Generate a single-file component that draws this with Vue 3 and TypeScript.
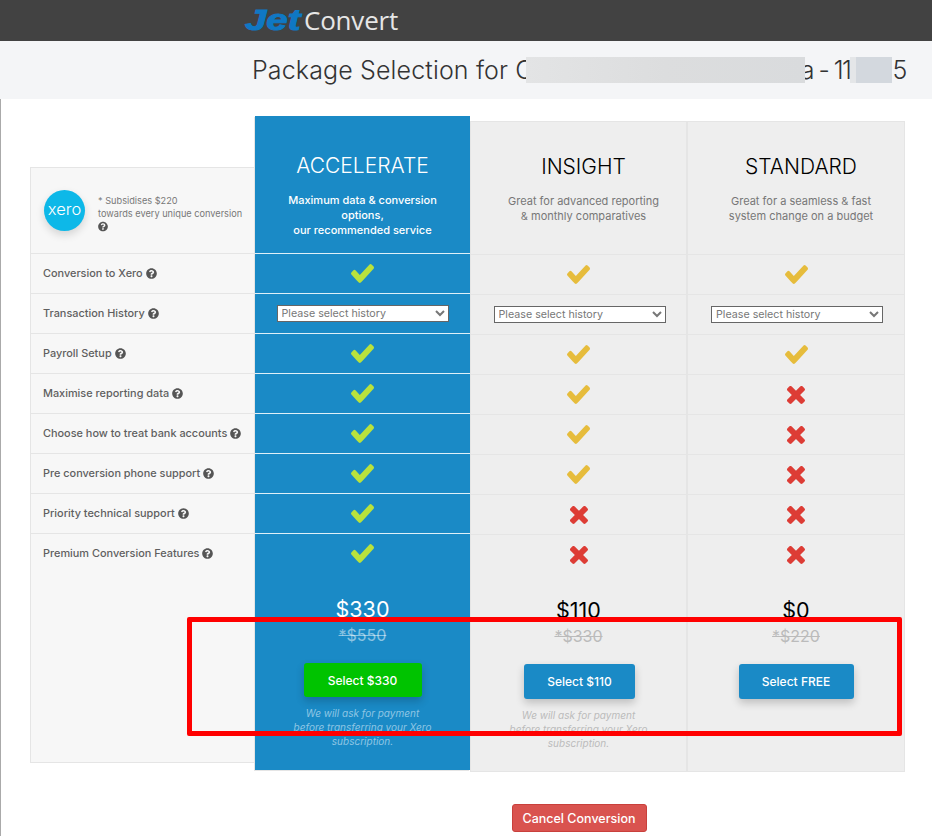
<script setup lang="ts">
type Mark = 'yes' | 'no' | 'select'
interface Plan {
  key: string
  name: string
  desc: string[]
  price: string
  was: string
  button: string
  note: boolean
  marks: Mark[]
}
const features: string[] = [
  'Conversion to Xero',
  'Transaction History',
  'Payroll Setup',
  'Maximise reporting data',
  'Choose how to treat bank accounts',
  'Pre conversion phone support',
  'Priority technical support',
  'Premium Conversion Features',
]
const plans: Plan[] = [
  {
    key: 'accelerate',
    name: 'ACCELERATE',
    desc: ['Maximum data & conversion', 'options,', 'our recommended service'],
    price: '$330',
    was: '*$550',
    button: 'Select $330',
    note: true,
    marks: ['yes', 'select', 'yes', 'yes', 'yes', 'yes', 'yes', 'yes'],
  },
  {
    key: 'insight',
    name: 'INSIGHT',
    desc: ['Great for advanced reporting', '& monthly comparatives'],
    price: '$110',
    was: '*$330',
    button: 'Select $110',
    note: true,
    marks: ['yes', 'select', 'yes', 'yes', 'yes', 'yes', 'no', 'no'],
  },
  {
    key: 'standard',
    name: 'STANDARD',
    desc: ['Great for a seamless & fast', 'system change on a budget'],
    price: '$0',
    was: '*$220',
    button: 'Select FREE',
    note: false,
    marks: ['yes', 'select', 'yes', 'no', 'no', 'no', 'no', 'no'],
  },
]
const help =
  'M504 256c0 136.997-111.043 248-248 248S8 392.997 8 256C8 119.083 119.043 8 256 8s248 111.083 248 248zM262.655 90c-54.497 0-89.255 22.957-116.549 63.758-3.536 5.286-2.353 12.415 2.715 16.258l34.699 26.31c5.205 3.947 12.621 3.008 16.665-2.122 17.864-22.658 30.113-35.797 57.303-35.797 20.429 0 45.698 13.148 45.698 32.958 0 14.976-12.363 22.667-32.534 33.976C247.128 238.528 216 254.941 216 296v4c0 6.627 5.373 12 12 12h56c6.627 0 12-5.373 12-12v-1.333c0-28.462 83.186-29.647 83.186-106.667 0-58.002-60.165-102-116.531-102zM256 338c-25.365 0-46 20.635-46 46 0 25.364 20.635 46 46 46s46-20.636 46-46c0-25.365-20.635-46-46-46z'
const check =
  'M1671 566q0 40-28 68l-724 724-136 136q-28 28-68 28t-68-28l-136-136-362-362q-28-28-28-68t28-68l136-136q28-28 68-28t68 28l294 295 656-657q28-28 68-28t68 28l136 136q28 28 28 68z'
const cross =
  'M1298 1322q0 40-28 68l-136 136q-28 28-68 28t-68-28l-294-294-294 294q-28 28-68 28t-68-28l-136-136q-28-28-28-68t28-68l294-294-294-294q-28-28-28-68t28-68l136-136q28-28 68-28t68 28l294 294 294-294q28-28 68-28t68 28l136 136q28 28 28 68t-28 68l-294 294 294 294q28 28 28 68z'
</script>

<template>
  <div class="page">
    <header class="topbar">
      <div class="logo"><span class="jet">Jet</span><span class="convert">Convert</span></div>
    </header>
    <div class="titlebar">
      <h1 class="title">
        <span>Package Selection for C</span><span class="redact wide"></span><span class="tail">a - 11</span><span class="redact small"></span><span>5</span>
      </h1>
    </div>
    <main class="main">
      <div class="table">
        <section class="col labels">
          <div class="labels-head">
            <div class="xero">xero</div>
            <div class="subsidy">
              <div>* Subsidises $220</div>
              <div>towards every unique conversion</div>
              <svg class="help" viewBox="0 0 512 512"><path :d="help" /></svg>
            </div>
          </div>
          <div v-for="f in features" :key="f" class="row label-row">
            <span>{{ f }}</span>
            <svg class="help" viewBox="0 0 512 512"><path :d="help" /></svg>
          </div>
        </section>
        <section v-for="p in plans" :key="p.key" class="col plan" :class="p.key">
          <div class="plan-head">
            <h2 class="plan-name">{{ p.name }}</h2>
            <p class="plan-desc"><span v-for="d in p.desc" :key="d">{{ d }}</span></p>
          </div>
          <div v-for="(m, i) in p.marks" :key="i" class="row mark-row">
            <svg v-if="m === 'yes'" class="check" viewBox="121 334 1550 1188" preserveAspectRatio="none"><path :d="check" /></svg>
            <svg v-else-if="m === 'no'" class="cross" viewBox="114 370 1184 1184"><path :d="cross" /></svg>
            <select v-else class="history"><option>Please select history</option></select>
          </div>
          <div class="plan-foot">
            <div class="price">{{ p.price }}</div>
            <div class="was">{{ p.was }}</div>
            <button class="select-btn" type="button">{{ p.button }}</button>
            <p v-if="p.note" class="note">We will ask for payment<br />before transferring your Xero<br />subscription.</p>
          </div>
        </section>
      </div>
      <div class="actions">
        <button class="cancel" type="button">Cancel Conversion</button>
      </div>
    </main>
    <div class="highlight"></div>
  </div>
</template>

<style>
html, body { margin: 0; background: #fff; }
</style>

<style scoped>
.page {
  position: relative;
  width: 932px;
  height: 836px;
  overflow: hidden;
  font-family: Inter, "Open Sans", "Liberation Sans", sans-serif;
  color: #333;
}
.topbar {
  height: 41px;
  background: #424242;
  padding-left: 245px;
  box-sizing: border-box;
}
.logo {
  display: flex;
  align-items: baseline;
  height: 41px;
  line-height: 40px;
}
.jet {
  display: inline-block;
  width: 59px;
  font-family: "Liberation Sans", sans-serif;
  font-weight: 700;
  font-style: italic;
  font-size: 30px;
  color: #0f78c4;
  -webkit-text-stroke: 1px #0f78c4;
  transform: scaleX(1.28);
  transform-origin: left center;
}
.convert {
  font-family: "Open Sans", sans-serif;
  font-size: 26px;
  color: #e6e6e6;
  letter-spacing: -0.2px;
}
.titlebar {
  height: 58px;
  background: #f4f5f7;
  padding-left: 252px;
  box-sizing: border-box;
}
.title {
  margin: 0;
  display: flex;
  align-items: center;
  height: 58px;
  font-size: 25px;
  font-weight: 300;
  letter-spacing: 0.14px;
  color: #333;
  white-space: nowrap;
}
.tail { letter-spacing: -1.5px; }
.redact { display: inline-block; height: 26px; position: relative; }
.redact.wide {
  width: 279px;
  margin-left: -8px;
  margin-right: -4px;
  background: linear-gradient(90deg, #e3e4e5, #dcddde 50%, #d9dbdd);
}
.redact.small {
  width: 42px;
  background: linear-gradient(90deg, #e4e6e8 14%, #d3d8de 14%);
}
.main {
  height: 737px;
  border-left: 1px solid #aaa;
  box-sizing: border-box;
  padding-top: 17px;
}
.table {
  display: grid;
  grid-template-columns: 225px 215px 218px 217px;
  margin-left: 29px;
  align-items: start;
}
.col { box-sizing: border-box; }
.labels {
  margin-top: 51px;
  height: 596px;
  background: #f7f7f7;
  border: 1px solid #e5e5e5;
  border-right: 0;
}
.labels-head {
  height: 85px;
  box-sizing: border-box;
  display: flex;
  align-items: center;
  padding-left: 13px;
}
.xero {
  width: 41px;
  height: 41px;
  flex: none;
  border-radius: 50%;
  background: #0db8e8;
  box-shadow: 0 4px 8px rgba(0, 0, 0, 0.14);
  color: #fff;
  font-size: 16.5px;
  font-weight: 300;
  line-height: 39px;
  text-align: center;
}
.subsidy {
  margin-left: 13px;
  padding-top: 5px;
  font-size: 9.2px;
  line-height: 13px;
  color: #777;
  white-space: nowrap;
}
.subsidy .help { display: block; margin: 0; width: 10px; height: 13px; }
.row {
  height: 40px;
  box-sizing: border-box;
  display: flex;
  align-items: center;
}
.label-row {
  border-top: 1px solid #e5e5e5;
  padding: 0 0 1px 12px;
  font-size: 10.9px;
  font-weight: 500;
  color: #5f5f5f;
  white-space: nowrap;
}
.help { width: 11px; height: 11px; margin-left: 3px; fill: #555; flex: none; }
.plan {
  text-align: center;
}
.accelerate {
  height: 654px;
  background: #1a8ac6;
  color: #fff;
  box-shadow: -1px 1px 0 #e5e5e5;
}
.insight, .standard {
  margin-top: 5px;
  height: 651px;
  background: #eee;
  color: #000;
  border: 1px solid #e5e5e5;
  border-left-width: 0;
}
.insight { border-right-width: 2px; border-left-width: 1px; }
.plan-head { box-sizing: border-box; }
.accelerate .plan-head { height: 137px; padding-top: 36px; }
.insight .plan-head, .standard .plan-head { height: 132px; padding: 31px 0 0 10px; }
.plan-name {
  margin: 0;
  font-size: 21px;
  line-height: 28px;
  font-weight: 350;
}
.plan-desc {
  margin: 13px 0 0;
  display: flex;
  flex-direction: column;
  font-size: 11px;
  line-height: 15px;
  color: #777;
}
.accelerate .plan-desc { color: #fff; font-weight: 500; }
.mark-row {
  justify-content: center;
  border-top: 1px solid #e5e5e5;
}
.accelerate .mark-row { border-top-color: #dff0f8; }
.check { width: 23px; height: 19px; fill: #e6bc3c; }
.accelerate .check { fill: #b9e23c; }
.cross { width: 18px; height: 18px; fill: #dd3c35; }
.history {
  width: 172px;
  height: 17px;
  padding: 0;
  background: #fff;
  border: 1px solid #666;
  border-radius: 0;
  font-family: inherit;
  font-size: 10.7px;
  color: #777;
}
.insight .history, .standard .history { margin-left: 2px; }
.plan-foot { padding-top: 20px; }
.price {
  font-size: 21.5px;
  line-height: 32px;
  margin-bottom: 1px;
  font-weight: 400;
}
.was {
  font-size: 16px;
  line-height: 19px;
  text-decoration: line-through;
  color: #bbb;
}
.accelerate .was { color: rgba(255, 255, 255, 0.5); }
.select-btn {
  display: block;
  margin: 18px auto 0;
  height: 35px;
  width: 111px;
  border: 0;
  border-radius: 3px;
  background: #1a8ac6;
  color: #fff;
  font-family: inherit;
  font-size: 12px;
  font-weight: 500;
  box-shadow: 0 4px 8px rgba(0, 0, 0, 0.2);
}
.accelerate .select-btn { background: #00c300; width: 118px; height: 34px; }
.insight .select-btn { margin-left: 53px; }
.standard .select-btn { width: 115px; }
.note {
  margin: 9px 0 0;
  font-size: 10px;
  line-height: 14px;
  font-style: italic;
  color: #bbb;
}
.accelerate .note { color: #8fc6e4; }
.actions { text-align: center; margin-top: 32px; padding-left: 225px; }
.cancel {
  width: 135px;
  height: 28px;
  background: #d9534f;
  border: 1px solid #c9403c;
  border-radius: 3px;
  color: #fff;
  font-family: inherit;
  font-size: 12.5px;
  font-weight: 500;
  padding: 0;
}
.highlight {
  position: absolute;
  left: 187px;
  top: 617px;
  width: 715px;
  height: 119px;
  box-sizing: border-box;
  border: 5px solid #f00;
  border-radius: 2px;
  pointer-events: none;
}
</style>
